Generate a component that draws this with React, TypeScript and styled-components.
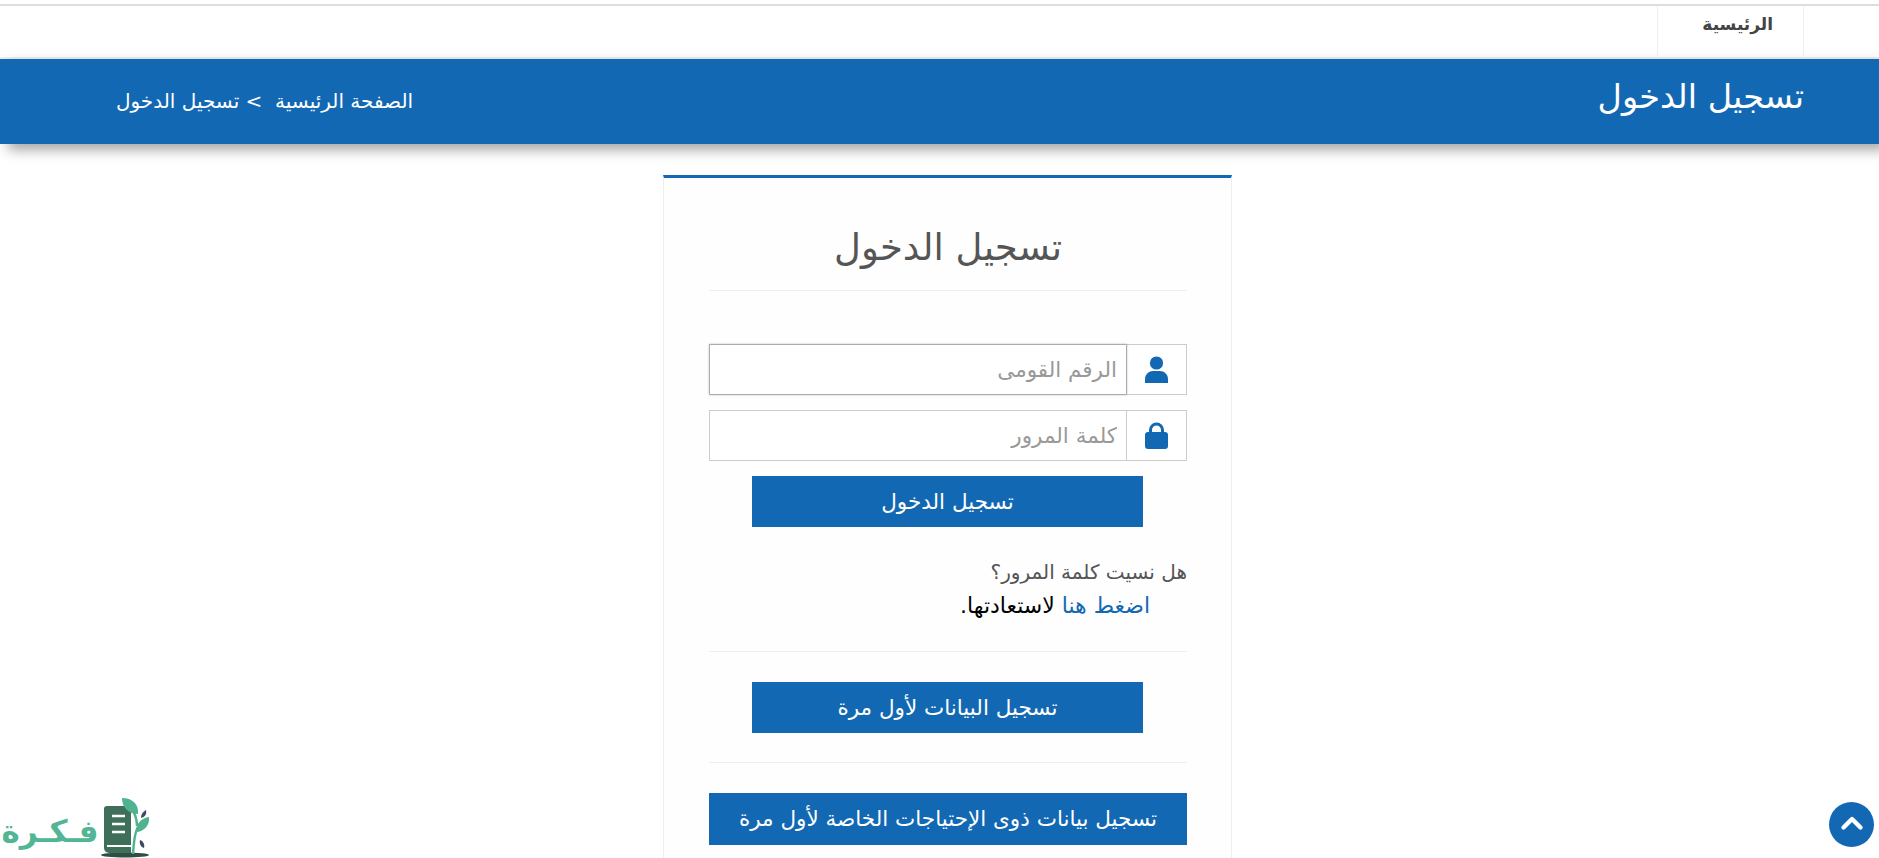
import React from "react";
import styled, { createGlobalStyle } from "styled-components";

const Global = createGlobalStyle`
  html, body { margin: 0; padding: 0; background: #fff; overflow: hidden; height: 858px; }
  body { font-family: "DejaVu Sans", "Noto Sans", sans-serif; direction: rtl; color: #555; }
  * { box-sizing: border-box; }
`;
const Page = styled.div`
  position: relative;
  height: 858px;
  overflow: hidden;
  padding-top: 4px;
`;
const TopBar = styled.nav`
  height: 55px;
  border-top: 2px solid #ddd;
  border-bottom: 2px solid #eee;
  background: #fff;
  padding-right: 75px;
  display: flex;
`;
const NavItem = styled.a`
  width: 147px;
  height: 51px;
  border-left: 1px solid #eee;
  border-right: 1px solid #eee;
  display: flex;
  justify-content: flex-start;
  padding: 6px 30px 0 0;
  font-size: 17px;
  font-weight: 700;
  line-height: 24px;
  color: #444;
`;
const Banner = styled.header`
  height: 85px;
  background: #1268b3;
  box-shadow: 8px 6px 12px rgba(0, 0, 0, 0.35);
  padding: 0 75px 0 116px;
  display: flex;
  align-items: center;
  justify-content: space-between;
  color: #fff;
`;
const BannerTitle = styled.h1`
  margin: 0 0 9px;
  font-size: 33.5px;
  font-weight: 400;
  line-height: 40px;
`;
const Crumbs = styled.div`
  font-size: 20px;
  line-height: 24px;
  margin-bottom: 2px;
  white-space: pre;
`;
const Main = styled.main`
  display: flex;
  justify-content: center;
  padding: 31px 0 0 16px;
`;
const Card = styled.section`
  width: 569px;
  height: 700px;
  background: #fefefe;
  border: 1px solid #eee;
  border-top: 3px solid #1268b3;
  padding: 0 44px 0 45px;
`;
const CardTitle = styled.h2`
  margin: 0;
  height: 113px;
  border-bottom: 1px solid #eee;
  font-size: 37px;
  font-weight: 400;
  line-height: 50px;
  padding-top: 45px;
  text-align: center;
  color: #555;
`;
const Form = styled.form`
  padding-top: 53px;
`;
const Row = styled.div`
  display: flex;
  height: 51px;
  margin-bottom: 15px;
  border: 1px solid #ccc;
  background: #fff;
`;
const IconCell = styled.span`
  width: 60px;
  flex: none;
  display: flex;
  align-items: center;
  justify-content: center;
  color: #1268b3;
  border-left: 1px solid #ccc;
`;
const Field = styled.input<{ $focus?: boolean }>`
  flex: 1;
  min-width: 0;
  border: 0;
  outline: 0;
  background: #fff;
  padding: 0 9px;
  font: 21.5px "DejaVu Sans", sans-serif;
  direction: rtl;
  box-shadow: ${(p) => (p.$focus ? "0 0 2px 1px rgba(0,0,0,.24)" : "none")};
  &::placeholder { color: #999; opacity: 1; }
`;
const Btn = styled.button<{ $wide?: boolean }>`
  display: block;
  width: ${(p) => (p.$wide ? "478px" : "391px")};
  height: ${(p) => (p.$wide ? "52px" : "51px")};
  margin: ${(p) => (p.$wide ? "0" : "0 44px 0 43px")};
  border: 0;
  background: #1268b3;
  color: #fff;
  font: 21.5px/1 "DejaVu Sans", sans-serif;
  direction: rtl;
  padding: 0;
`;
const Help = styled.div`
  margin-top: 29px;
  font-size: 20px;
  line-height: 33px;
  height: 96px;
  border-bottom: 1px solid #eee;
  color: #555;
`;
const HelpLine = styled.p`
  margin: 0;
`;
const HelpIndent = styled.p`
  margin: 0;
  padding-right: 37px;
  color: #000;
  font-size: 22px;
  font-weight: 400;
`;
const HelpLink = styled.a`
  color: #1268b3;
`;
const Section = styled.div<{ $last?: boolean }>`
  padding: 30px 0 ${(p) => (p.$last ? "0" : "29px")};
  border-bottom: ${(p) => (p.$last ? "0" : "1px solid #eee")};
`;
const ToTop = styled.a`
  position: absolute;
  left: 1829px;
  top: 802px;
  width: 45px;
  height: 45px;
  border-radius: 50%;
  background: #1268b3;
  display: flex;
  align-items: center;
  justify-content: center;
  padding-bottom: 4px;
`;
const Logo = styled.div`
  position: absolute;
  left: 0;
  bottom: 0;
  width: 152px;
  height: 62px;
  direction: ltr;
`;
const LogoText = styled.span`
  position: absolute;
  left: 2px;
  bottom: 2px;
  width: 96px;
  display: flex;
  justify-content: center;
  direction: rtl;
  font: 700 31px/50px "DejaVu Sans", sans-serif;
  color: #52b594;
  white-space: nowrap;
`;
const LogoMark = styled.svg`
  position: absolute;
  left: 100px;
  bottom: 0;
`;

const App = () => (
  <Page>
    <Global />
    <TopBar>
      <NavItem>الرئيسية</NavItem>
    </TopBar>
    <Banner>
      <BannerTitle>تسجيل الدخول</BannerTitle>
      <Crumbs>{"الصفحة الرئيسية  > تسجيل الدخول"}</Crumbs>
    </Banner>
    <Main>
      <Card>
        <CardTitle>تسجيل الدخول</CardTitle>
        <Form>
          <Row>
            <IconCell>
              <svg width="23" height="27" viewBox="0 0 23 27" fill="currentColor">
                <circle cx="11.5" cy="7" r="6.6" />
                <path d="M0 27v-3.5C0 18 4 15 8 15h7c4 0 8 3 8 8.5V27z" />
              </svg>
            </IconCell>
            <Field $focus placeholder="الرقم القومى" />
          </Row>
          <Row>
            <IconCell>
              <svg width="23" height="27" viewBox="0 0 23 27" fill="currentColor">
                <path d="M4 11V8a7.5 7.5 0 0 1 15 0v3h-3V8a4.5 4.5 0 0 0-9 0v3z" />
                <rect x="0" y="10" width="23" height="17" rx="3" />
              </svg>
            </IconCell>
            <Field placeholder="كلمة المرور" />
          </Row>
          <Btn type="button">تسجيل الدخول</Btn>
        </Form>
        <Help>
          <HelpLine>هل نسيت كلمة المرور؟</HelpLine>
          <HelpIndent>
            <HelpLink>اضغط هنا</HelpLink> لاستعادتها.
          </HelpIndent>
        </Help>
        <Section>
          <Btn type="button">تسجيل البيانات لأول مرة</Btn>
        </Section>
        <Section $last>
          <Btn $wide type="button">تسجيل بيانات ذوى الإحتياجات الخاصة لأول مرة</Btn>
        </Section>
      </Card>
    </Main>
    <ToTop>
      <svg width="24" height="16" viewBox="0 0 24 16" fill="none" stroke="#fff" strokeWidth="4.4" strokeLinecap="round" strokeLinejoin="round">
        <path d="M3.5 12.5 12 4l8.5 8.5" />
      </svg>
    </ToTop>
    <Logo>
      <LogoText>فـكـرة</LogoText>
      <LogoMark width="52" height="62" viewBox="0 0 52 62">
        <ellipse cx="25" cy="59" rx="24" ry="2.4" fill="#2f4f45" />
        <path d="M7 10h24v47H9a5 5 0 0 1-5-5V13a3 3 0 0 1 3-3z" fill="#3f6f5a" />
        <path d="M12 20h13M12 28h13M12 36h13" stroke="#fff" strokeWidth="2.6" />
        <path d="M7 50h24" stroke="#fff" strokeWidth="2" />
        <path d="M33 58c1-14 2-24 7-30M37 30c0-8-3-14-6-18" stroke="#4fb38f" strokeWidth="2.4" fill="none" />
        <path d="M22 2c10 0 17 6 16 16-9 0-16-6-16-16z" fill="#4fb38f" />
        <path d="M36 36c0-9 6-14 13-15 1 8-5 15-13 15z" fill="#4fb38f" />
        <path d="M41 22c0-4 2-6 5-8 1 4-1 7-5 8z" fill="#3d4a63" />
        <path d="M40 44c3 1 5 4 4 8-3-1-5-4-4-8z" fill="#3d4a63" />
      </LogoMark>
    </Logo>
  </Page>
);
export default App;
